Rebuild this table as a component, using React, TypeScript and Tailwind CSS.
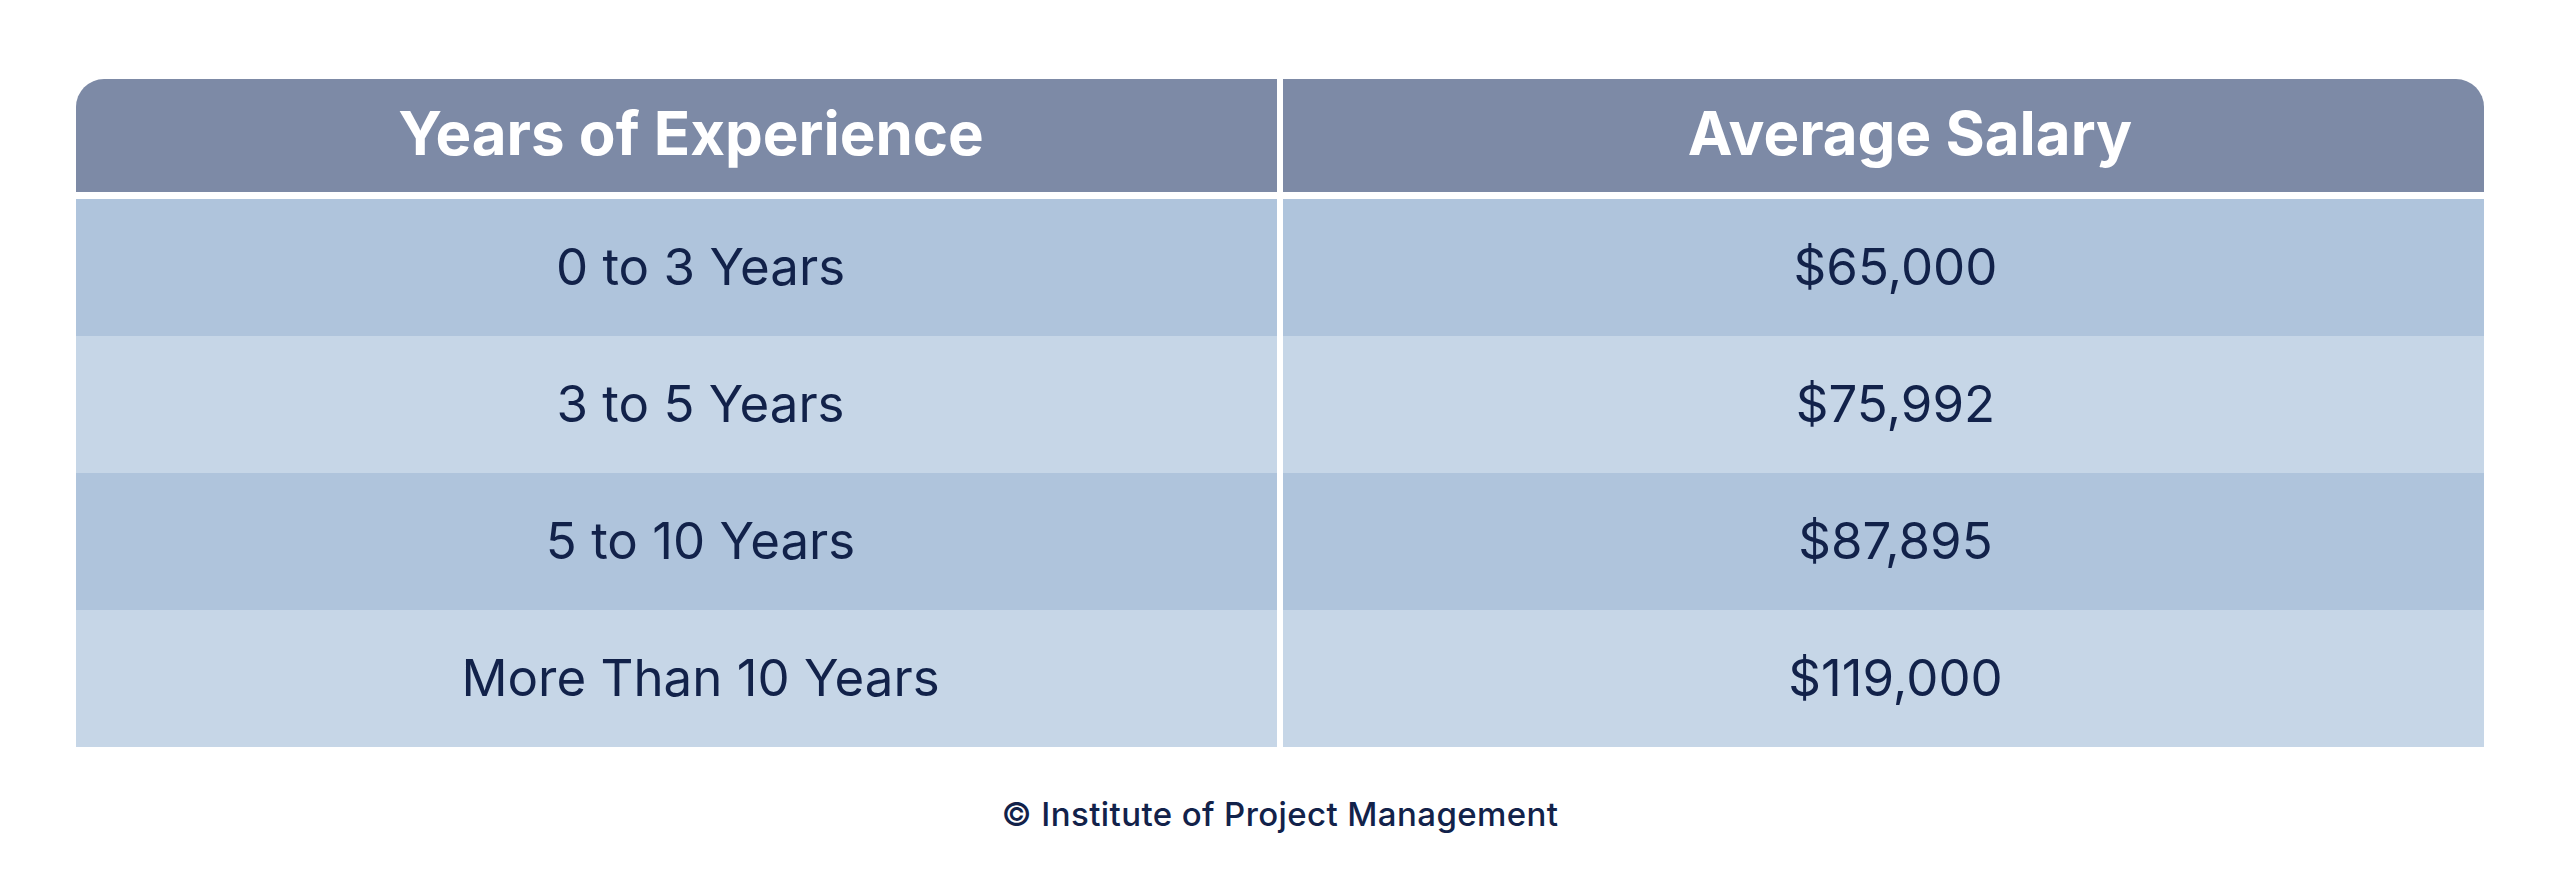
import React from 'react';

const rows = [
  { years: '0 to 3 Years', salary: '$65,000', bg: 'bg-[#afc4dc]' },
  { years: '3 to 5 Years', salary: '$75,992', bg: 'bg-[#c6d6e7]' },
  { years: '5 to 10 Years', salary: '$87,895', bg: 'bg-[#afc4dc]' },
  { years: 'More Than 10 Years', salary: '$119,000', bg: 'bg-[#c6d6e7]' },
];

const App = () => {
  return (
    <div className="w-full h-[892px] bg-white pt-[79px] px-[76px] font-['Inter',sans-serif] text-[#12224a]">
      {/* Table */}
      <div className="flex flex-col gap-y-[7px]">
        <div className="grid grid-cols-2 gap-x-[6px]">
          <div className="h-[113px] flex items-center justify-center pl-[29px] pb-[6px] bg-[#7d8aa6] rounded-tl-[28px]">
            <span className="text-[60px] font-bold text-white">Years of Experience</span>
          </div>
          <div className="h-[113px] flex items-center justify-center pl-[53px] pb-[6px] bg-[#7d8aa6] rounded-tr-[28px]">
            <span className="text-[60px] font-bold text-white">Average Salary</span>
          </div>
        </div>

        <div className="flex flex-col">
          {rows.map((row) => (
            <div key={row.years} className="grid grid-cols-2 gap-x-[6px]">
              <div className={`h-[137px] flex items-center justify-center pl-[48px] ${row.bg}`}>
                <span className="text-[51px] font-normal">{row.years}</span>
              </div>
              <div className={`h-[137px] flex items-center justify-center pl-[24px] ${row.bg}`}>
                <span className="text-[51px] font-normal">{row.salary}</span>
              </div>
            </div>
          ))}
        </div>
      </div>

      {/* Footer */}
      <p className="mt-[48px] text-center text-[33px] leading-[38px] font-medium tracking-[0.4px]">
        © Institute of Project Management
      </p>
    </div>
  );
};

export default App;
